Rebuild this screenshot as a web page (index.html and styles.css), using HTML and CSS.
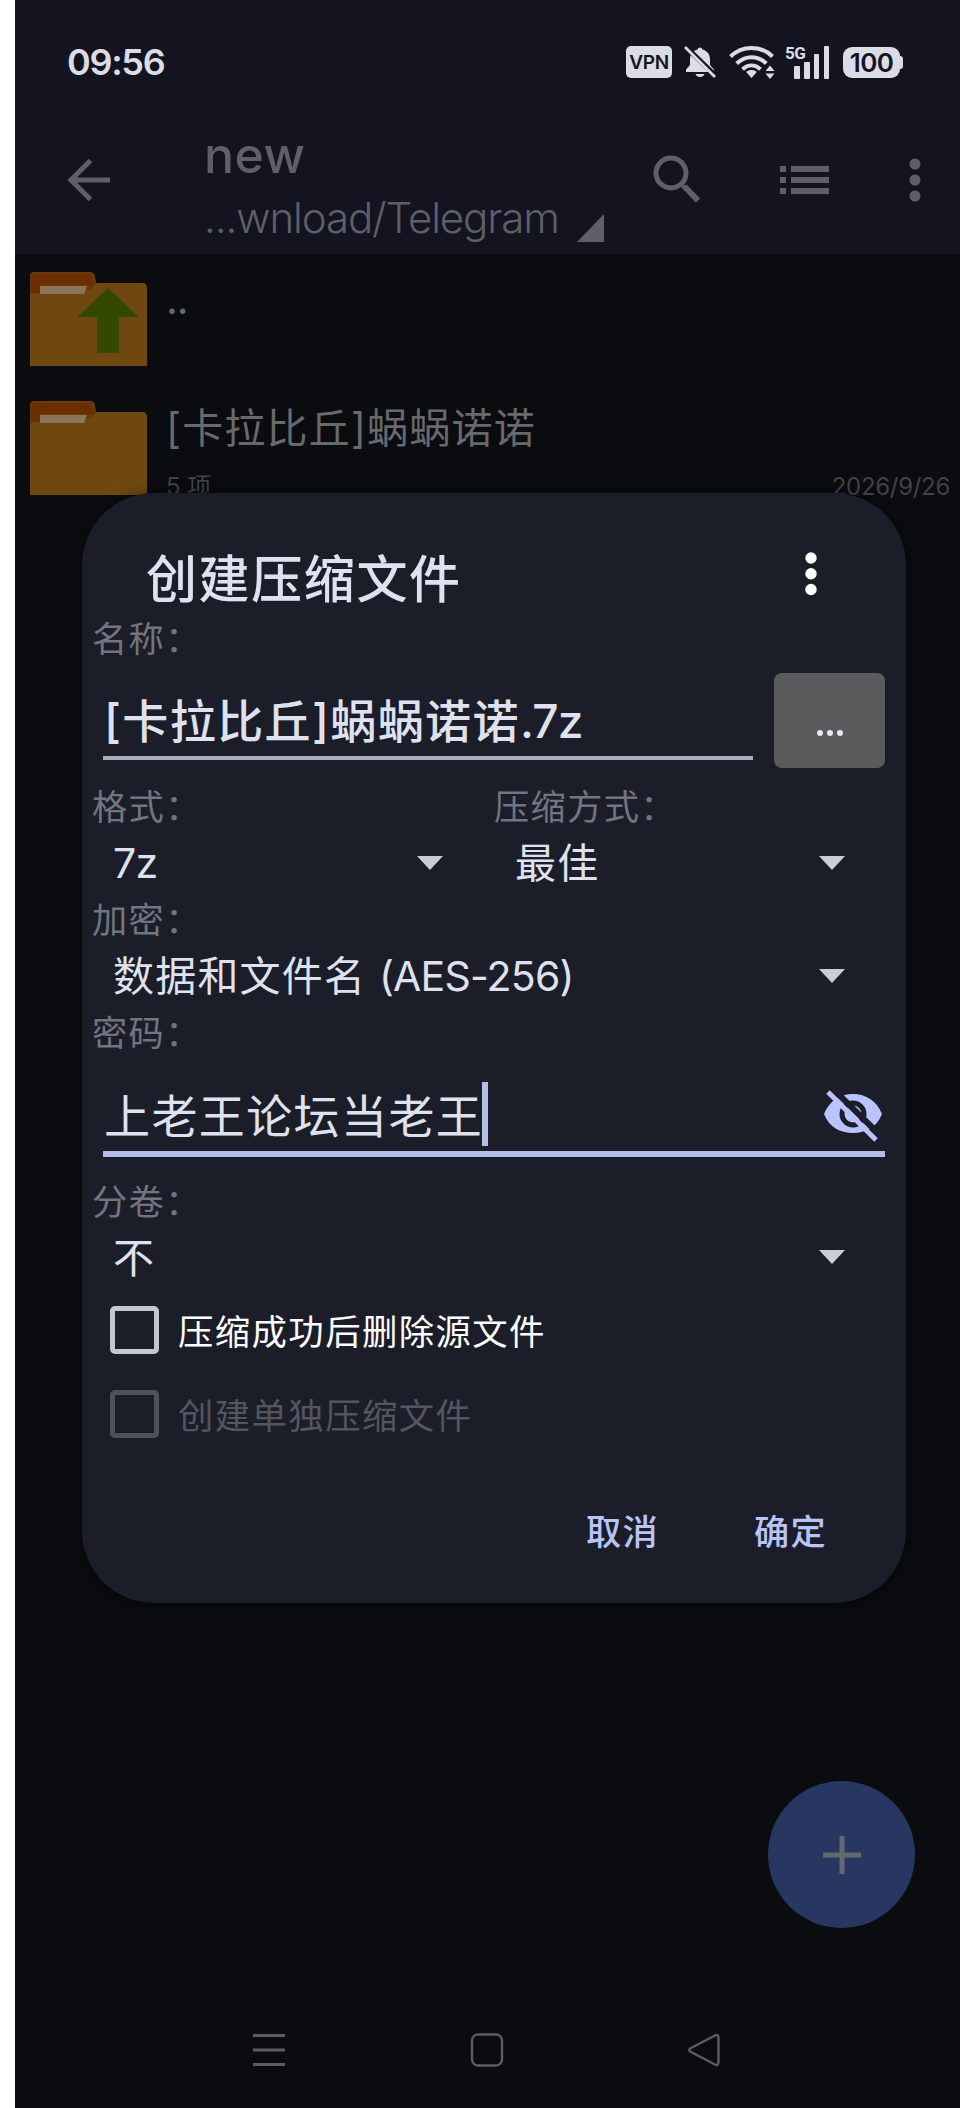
FILE: index.html
```html
<!DOCTYPE html>
<html lang="zh-CN">
<head>
<meta charset="utf-8">
<title>创建压缩文件</title>
<link rel="stylesheet" href="styles.css">
</head>
<body>
<div class="phone">
  <header class="top">
    <div class="status">
      <span class="clock">09:56</span>
      <div class="status-icons">
        <span class="vpn">VPN</span>
        <svg class="bell" width="32" height="33" viewBox="0 0 32 33"><path fill="#dcdce6" d="M16 1.500c1.300 0 2.200.8 2.400 2 5 1.300 7.600 5 7.600 10v5.500l4 4.500v2.500H2v-2.500l4-4.500v-5.500c0-5 2.600-8.700 7.600-10 .2-1.200 1.100-2 2.400-2zM11.500 28h9c-.6 2-2.300 3-4.500 3s-3.900-1-4.500-3z"/><path d="M-1 3l32 31" stroke="#13141f" stroke-width="5" transform="translate(2.500 -2.500)"/><path d="M1 1l30 30" stroke="#dcdce6" stroke-width="2.600"/></svg>
        <svg class="wifi" width="46" height="34" viewBox="0 0 46 34"><g fill="none" stroke="#dcdce6" stroke-width="4"><path d="M1.500 11.500c11.500-11.500 30.500-11.500 42 0"/><path d="M7.700 18.500c8.500-8.500 21.100-8.500 29.600 0"/><path d="M13.500 24.300c5.500-5 12.500-5 18 0"/></g><path fill="#dcdce6" d="M22.500 33l-5.300-6c3-2.600 7.600-2.600 10.600 0zM36.500 26l4.500-5.500 4.500 5.500zM36.500 28.500h9L41 34z"/></svg>
        <div class="cell"><span class="gen">5G</span><svg width="36" height="33" viewBox="0 0 36 33" fill="#dcdce6"><rect x="0" y="20" width="6" height="13" rx="1"/><rect x="10" y="16" width="6" height="17" rx="1"/><rect x="20" y="8" width="5" height="25" rx="1"/><rect x="30" y="0" width="5" height="33" rx="1"/></svg></div>
        <div class="battery"><span class="level">100</span><i class="nub"></i></div>
      </div>
    </div>
    <div class="toolbar">
      <svg class="back" width="44" height="44" viewBox="0 0 44 44" fill="none" stroke="#5e5f69" stroke-width="5"><path d="M24.500 2.500L5 22l19.500 19.500M5 22h39"/></svg>
      <div class="heading">
        <div class="title">new</div>
        <div class="path"><span class="path-text">...wnload/Telegram</span><i class="corner"></i></div>
      </div>
      <svg class="search" width="48" height="48" viewBox="0 0 48 48" fill="none" stroke="#5e5f69"><circle cx="18" cy="18" r="15" stroke-width="5"/><path d="M28.500 29.500l3 3" stroke-width="4"/><path d="M31.500 31.500l13.500 14" stroke-width="6"/></svg>
      <svg class="list-icon" width="49" height="28" viewBox="0 0 49 28" fill="#5e5f69"><path d="M0 0h6v6H0zM0 11h6v6H0zM0 22h6v6H0zM11 0h38v6H11zM11 11h38v6H11zM11 22h38v6H11z"/></svg>
      <svg class="more" width="12" height="44" viewBox="0 0 12 44" fill="#5e5f69"><circle cx="6" cy="6" r="5.500"/><circle cx="6" cy="22" r="5.500"/><circle cx="6" cy="38" r="5.500"/></svg>
    </div>
  </header>

  <main class="files">
    <div class="row">
      <svg class="folder" width="117" height="94" viewBox="0 0 117 94"><path fill="#6b390c" d="M4 0h56q4 0 5 4l3 20H0V4q0-4 4-4z"/><path fill="#6b2e00" d="M3 2h57l4 11H10v10H1V5z"/><path fill="#6f4811" d="M0 22l10-1 50-3 7-7h45q5 0 5 5v78H0z"/><path fill="#8a775a" d="M10 14h47l-3 8H10z"/><path fill="#344900" d="M78 16l31 29H89v36H67V45H47z"/></svg>
      <div class="info"><div class="name dots">..</div></div>
    </div>
    <div class="row">
      <svg class="folder" width="117" height="94" viewBox="0 0 117 94"><path fill="#6b390c" d="M4 0h56q4 0 5 4l3 20H0V4q0-4 4-4z"/><path fill="#6b2e00" d="M3 2h57l4 11H10v10H1V5z"/><path fill="#6f4811" d="M0 22l10-1 50-3 7-7h45q5 0 5 5v78H0z"/><path fill="#8a775a" d="M10 14h47l-3 8H10z"/></svg>
      <div class="info">
        <div class="name">[卡拉比丘]蜗蜗诺诺</div>
        <div class="meta"><span>5 项</span><span class="date">2026/9/26</span></div>
      </div>
    </div>
  </main>

  <button class="fab"><svg width="38" height="38" viewBox="0 0 38 38" stroke="#64696c" stroke-width="5"><path d="M19 0v38M0 19h38"/></svg></button>

  <nav class="nav">
    <svg width="34" height="34" viewBox="0 0 34 34" stroke="#5c5d60" stroke-width="2.800"><path d="M1 2.500h32M1 17h32M1 31.500h32"/></svg>
    <svg width="34" height="34" viewBox="0 0 34 34" fill="none" stroke="#5c5d60" stroke-width="2.400"><rect x="2" y="1.500" width="30" height="31" rx="6"/></svg>
    <svg width="34" height="34" viewBox="0 0 34 34" fill="none" stroke="#5c5d60" stroke-width="2.400"><path d="M27.500 2.700Q31.500 0.500 31.500 5v24q0 4.500-4 2.200L4 19q-3.500-2 0-4z"/></svg>
  </nav>

  <section class="dialog">
    <div class="dialog-head">
      <h1 class="dialog-title">创建压缩文件</h1>
      <svg width="12" height="44" viewBox="0 0 12 44" fill="#fff"><circle cx="6" cy="6" r="5.700"/><circle cx="6" cy="21.700" r="5.700"/><circle cx="6" cy="37.500" r="5.700"/></svg>
    </div>
    <div class="label">名称：</div>
    <div class="name-row">
      <div class="input file-input">[卡拉比丘]蜗蜗诺诺<span class="latin">.7z</span></div>
      <button class="browse"><i></i><i></i><i></i></button>
    </div>
    <div class="pair">
      <div class="field"><div class="label">格式：</div><div class="select"><span class="latin">7z</span><i class="arrow"></i></div></div>
      <div class="field"><div class="label">压缩方式：</div><div class="select"><span>最佳</span><i class="arrow"></i></div></div>
    </div>
    <div class="field"><div class="label">加密：</div><div class="select"><span>数据和文件名 <span class="latin">(AES-256)</span></span><i class="arrow"></i></div></div>
    <div class="label">密码：</div>
    <div class="input password"><span>上老王论坛当老王</span><i class="caret"></i>
      <svg class="eye" width="60" height="52" viewBox="0 0 60 52"><path fill="#b9c3ff" d="M1 24C6 11 17 4 30 4s24 7 29 20C54 37 43 43 30 43S6 37 1 24z"/><circle cx="30" cy="24" r="11" fill="none" stroke="#1b1e29" stroke-width="5"/><path d="M8-3l52 51" stroke="#1b1e29" stroke-width="6"/><path d="M5 2l48 48" stroke="#b9c3ff" stroke-width="5"/></svg>
    </div>
    <div class="field split"><div class="label">分卷：</div><div class="select"><span>不</span><i class="arrow"></i></div></div>
    <div class="check"><i class="box"></i><span>压缩成功后删除源文件</span></div>
    <div class="check disabled"><i class="box"></i><span>创建单独压缩文件</span></div>
    <div class="actions"><span>取消</span><span>确定</span></div>
  </section>
</div>
</body>
</html>
```

FILE: styles.css
```css
* { box-sizing: border-box; }
body { margin: 0; background: #fff; padding-left: 15px; font-family: Inter, "Noto Sans CJK SC", sans-serif; }
i { display: block; flex: none; }
svg { display: block; flex: none; overflow: visible; }
button { border: 0; padding: 0; }
.phone { position: relative; width: 945px; height: 2108px; background: #0a0c10; display: flex; flex-direction: column; overflow: hidden; white-space: nowrap; }

.top { height: 254px; flex: none; background: #13141f; }
.status { height: 124px; padding: 0 57px 0 52px; display: flex; justify-content: space-between; align-items: center; color: #dcdce6; }
.clock { font-size: 36px; line-height: 40px; font-weight: 600; letter-spacing: -1.300px; }
.status-icons { display: flex; align-items: center; height: 34px; }
.vpn { width: 46px; height: 32px; border-radius: 5px; background: #dcdce6; color: #13141f; font-size: 19px; font-weight: 600; line-height: 33px; letter-spacing: -0.300px; text-align: center; margin-right: 12px; }
.wifi { margin-left: 13px; }
.cell { position: relative; margin-left: 19px; width: 36px; }
.gen { position: absolute; left: -9px; top: -2px; font: 700 17px/18px Roboto, sans-serif; letter-spacing: -0.500px; }
.battery { display: flex; align-items: center; margin-left: 13px; }
.level { width: 57px; height: 31px; border-radius: 9px; background: #dcdce6; color: #13141f; font-size: 26px; font-weight: 600; line-height: 32px; letter-spacing: -0.600px; text-align: center; }
.nub { width: 3px; height: 13px; background: #dcdce6; border-radius: 0 3px 3px 0; }

.toolbar { height: 130px; display: flex; align-items: flex-start; padding-left: 51px; color: #5e5f69; }
.back { margin-top: 34px; }
.heading { margin-left: 94px; width: 401px; }
.title { font-size: 50px; line-height: 58px; margin-top: 2px; font-weight: 500; letter-spacing: 0.500px; }
.path { display: flex; font-size: 42px; line-height: 50px; margin-top: 9px; align-items: flex-start; font-weight: 350; letter-spacing: -1.100px; }
.path-text { width: 373px; }
.corner { width: 27px; height: 28px; margin-top: 21px; background: #5e5f69; clip-path: polygon(100% 0, 100% 100%, 0 100%); }
.search { margin: 31px 0 0 48px; }
.list-icon { margin: 42px 0 0 79px; }
.more { margin: 34px 0 0 80px; }

.files { padding: 18px 10px 0 15px; }
.row { display: flex; height: 129px; }
.info { margin-left: 19px; flex: 1; color: #68696c; }
.name { font-size: 41px; line-height: 54px; letter-spacing: 1.200px; font-weight: 400; }
.dots { letter-spacing: -1px; }
.meta { display: flex; justify-content: space-between; font-size: 24px; line-height: 30px; margin-top: 17px; color: #414246; font-weight: 400; }
.date { letter-spacing: -0.300px; }

.fab { position: absolute; left: 753px; top: 1781px; width: 147px; height: 147px; border-radius: 50%; background: #273762; display: grid; place-items: center; }
.nav { margin-top: auto; height: 116px; padding: 0 239px 0 237px; display: flex; justify-content: space-between; align-items: center; }

.dialog { position: absolute; left: 67px; top: 493px; width: 824px; height: 1110px; border-radius: 72px; background: #1b1e29; color: #dfe1ee; box-shadow: 0 2px 14px #0008; padding: 0 21px 0 10px; }
.dialog-head { height: 122px; display: flex; justify-content: space-between; padding: 0 68px 0 54px; align-items: flex-start; }
.dialog-title { margin: 49px 0 0; font-size: 51px; line-height: 76px; letter-spacing: 1.600px; font-weight: 500; }
.dialog-head svg { margin-top: 59px; }
.label { font-size: 35.200px; line-height: 44px; height: 44px; padding: 2px 0 0 0; letter-spacing: 1.400px; color: #727480; font-weight: 400; }
.latin { letter-spacing: -0.800px; }
.name-row { display: flex; height: 124px; }
.input { font-size: 46px; letter-spacing: 1.400px; }
.file-input { width: 650px; margin-left: 11px; height: 101px; padding: 22px 0 0 1px; line-height: 80px; border-bottom: 4px solid #a9abb8; font-weight: 500; }
.browse { margin: 14px 0 0 21px; width: 111px; height: 95px; border-radius: 8px; background: #5b5b5d; display: flex; justify-content: center; gap: 4px; padding-top: 57px; }
.browse i { width: 6px; height: 6px; border-radius: 3px; background: #e8e8ee; }
.pair { display: flex; }
.pair .field { width: 402px; }
.pair .field + .field { width: 391px; }
.select { height: 69px; padding: 0 40px 0 21px; display: flex; justify-content: space-between; font-size: 41px; letter-spacing: 1.200px; line-height: 73px; }
.pair .field:first-child .select { padding-right: 51px; }
.arrow { width: 26px; height: 14px; margin-top: 29px; background: #caccd6; clip-path: polygon(0 0, 100% 0, 50% 100%); }
.password { margin-left: 11px; height: 104px; padding: 24px 0 0 1px; line-height: 78px; border-bottom: 6px solid #b4bde8; display: flex; }
.caret { width: 6px; height: 64px; margin: 5px 0 0 -1px; background: #b4bde8; }
.eye { margin: 13px 2px 0 auto; }
.split { margin-top: 21px; }
.split .select { height: 66px; }
.split .arrow { margin-top: 28px; }
.check { display: flex; align-items: center; height: 84px; padding-left: 18px; font-size: 35.400px; letter-spacing: 1.400px; color: #fff; }
.check span { margin-top: -2px; }
.box { width: 49px; height: 48px; border: 5px solid #c4c6d2; border-radius: 5px; margin-right: 19px; }
.disabled { color: #53555f; }
.disabled .box { border-color: #4e505b; }
.actions { display: flex; justify-content: flex-end; gap: 95px; margin-top: 48px; padding-right: 58px; font-size: 35.200px; letter-spacing: 1.300px; line-height: 56px; font-weight: 500; color: #b9c3fb; }
```
